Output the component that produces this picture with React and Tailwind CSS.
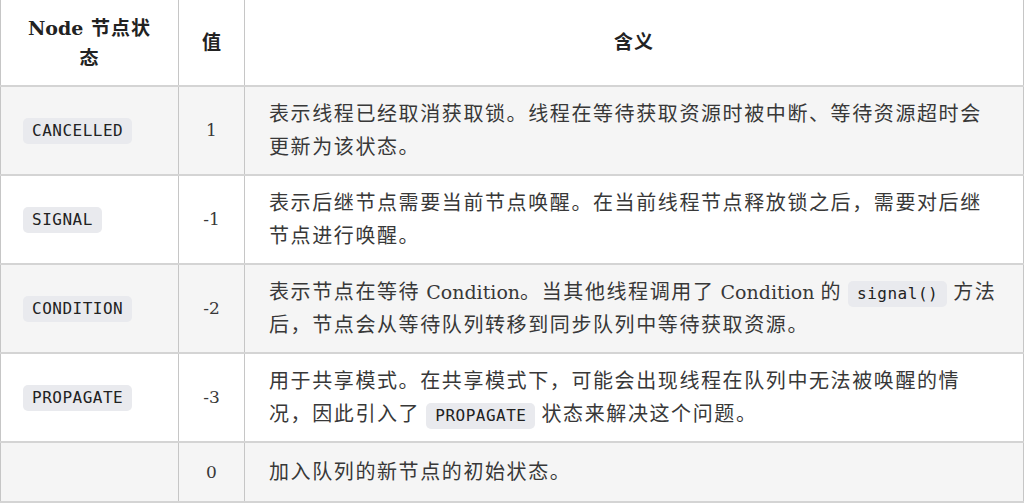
const rows = [
  {
    name: "CANCELLED",
    value: "1",
    desc: <>表示线程已经取消获取锁。线程在等待获取资源时被中断、等待资源超时会更新为该状态。</>,
  },
  {
    name: "SIGNAL",
    value: "-1",
    desc: <>表示后继节点需要当前节点唤醒。在当前线程节点释放锁之后，需要对后继节点进行唤醒。</>,
  },
  {
    name: "CONDITION",
    value: "-2",
    desc: (
      <>
        表示节点在等待<Latin> Condition</Latin>。当其他线程调用了<Latin> Condition </Latin>的<Latin> </Latin><Code>signal()</Code><Latin> </Latin>方法后，节点会从等待队列转移到同步队列中等待获取资源。
      </>
    ),
  },
  {
    name: "PROPAGATE",
    value: "-3",
    desc: (
      <>
        用于共享模式。在共享模式下，可能会出现线程在队列中无法被唤醒的情况，因此引入了<Latin> </Latin><Code>PROPAGATE</Code><Latin> </Latin>状态来解决这个问题。
      </>
    ),
  },
  { name: null, value: "0", desc: <>加入队列的新节点的初始状态。</> },
];

function Latin({ children }) {
  return <span className="text-[19px] tracking-normal">{children}</span>;
}

function Code({ children }) {
  return (
    <code className="inline-block h-[26px] rounded-[5px] bg-[#e9eaee] px-[9px] align-middle font-['DejaVu_Sans_Mono',monospace] text-[16px] leading-[26px] tracking-[0.5px] text-[#222]">
      {children}
    </code>
  );
}

export default function App() {
  return (
    <div className="h-[504px] w-[1024px] overflow-hidden bg-white font-['DejaVu_Serif','Noto_Sans_CJK_SC',serif] text-[#383838]">
      <table className="w-[1024px] table-fixed border-collapse">
        <colgroup>
          <col className="w-[178px]" />
          <col className="w-[66px]" />
          <col />
        </colgroup>
        <thead>
          <tr className="h-[86px] border-b-2 border-[#d4d4d4]">
            <th className="border-x border-[#c6c6c6] px-[22px] text-center text-[19px] font-bold leading-[30px] tracking-[1px] text-[#222]">
              <span className="tracking-normal">Node</span> 节点状态
            </th>
            <th className="border-x border-[#c6c6c6] text-center text-[19px] font-bold text-[#222]">值</th>
            <th className="border-x border-[#c6c6c6] text-center text-[19px] font-bold tracking-[1px] text-[#222]">含义</th>
          </tr>
        </thead>
        <tbody>
          {rows.map((r, i) => (
            <tr
              key={i}
              className={`border-b-2 border-[#d4d4d4] ${i === rows.length - 1 ? "h-[60px]" : "h-[58px]"} ${i % 2 === 0 ? "bg-[#f5f5f5]" : "bg-white"}`}
            >
              <td className="border-x border-[#c6c6c6] px-[22px] pt-[11px] pb-[10px] align-middle">
                {r.name && <Code>{r.name}</Code>}
              </td>
              <td className="border-x border-[#c6c6c6] pt-[11px] pb-[10px] text-center align-middle text-[17px]">{r.value}</td>
              <td className="border-x border-[#c6c6c6] pt-[11px] pb-[10px] pl-6 pr-5 align-middle text-[20px] leading-[33px] tracking-[1.6px]">
                {r.desc}
              </td>
            </tr>
          ))}
        </tbody>
      </table>
    </div>
  );
}
